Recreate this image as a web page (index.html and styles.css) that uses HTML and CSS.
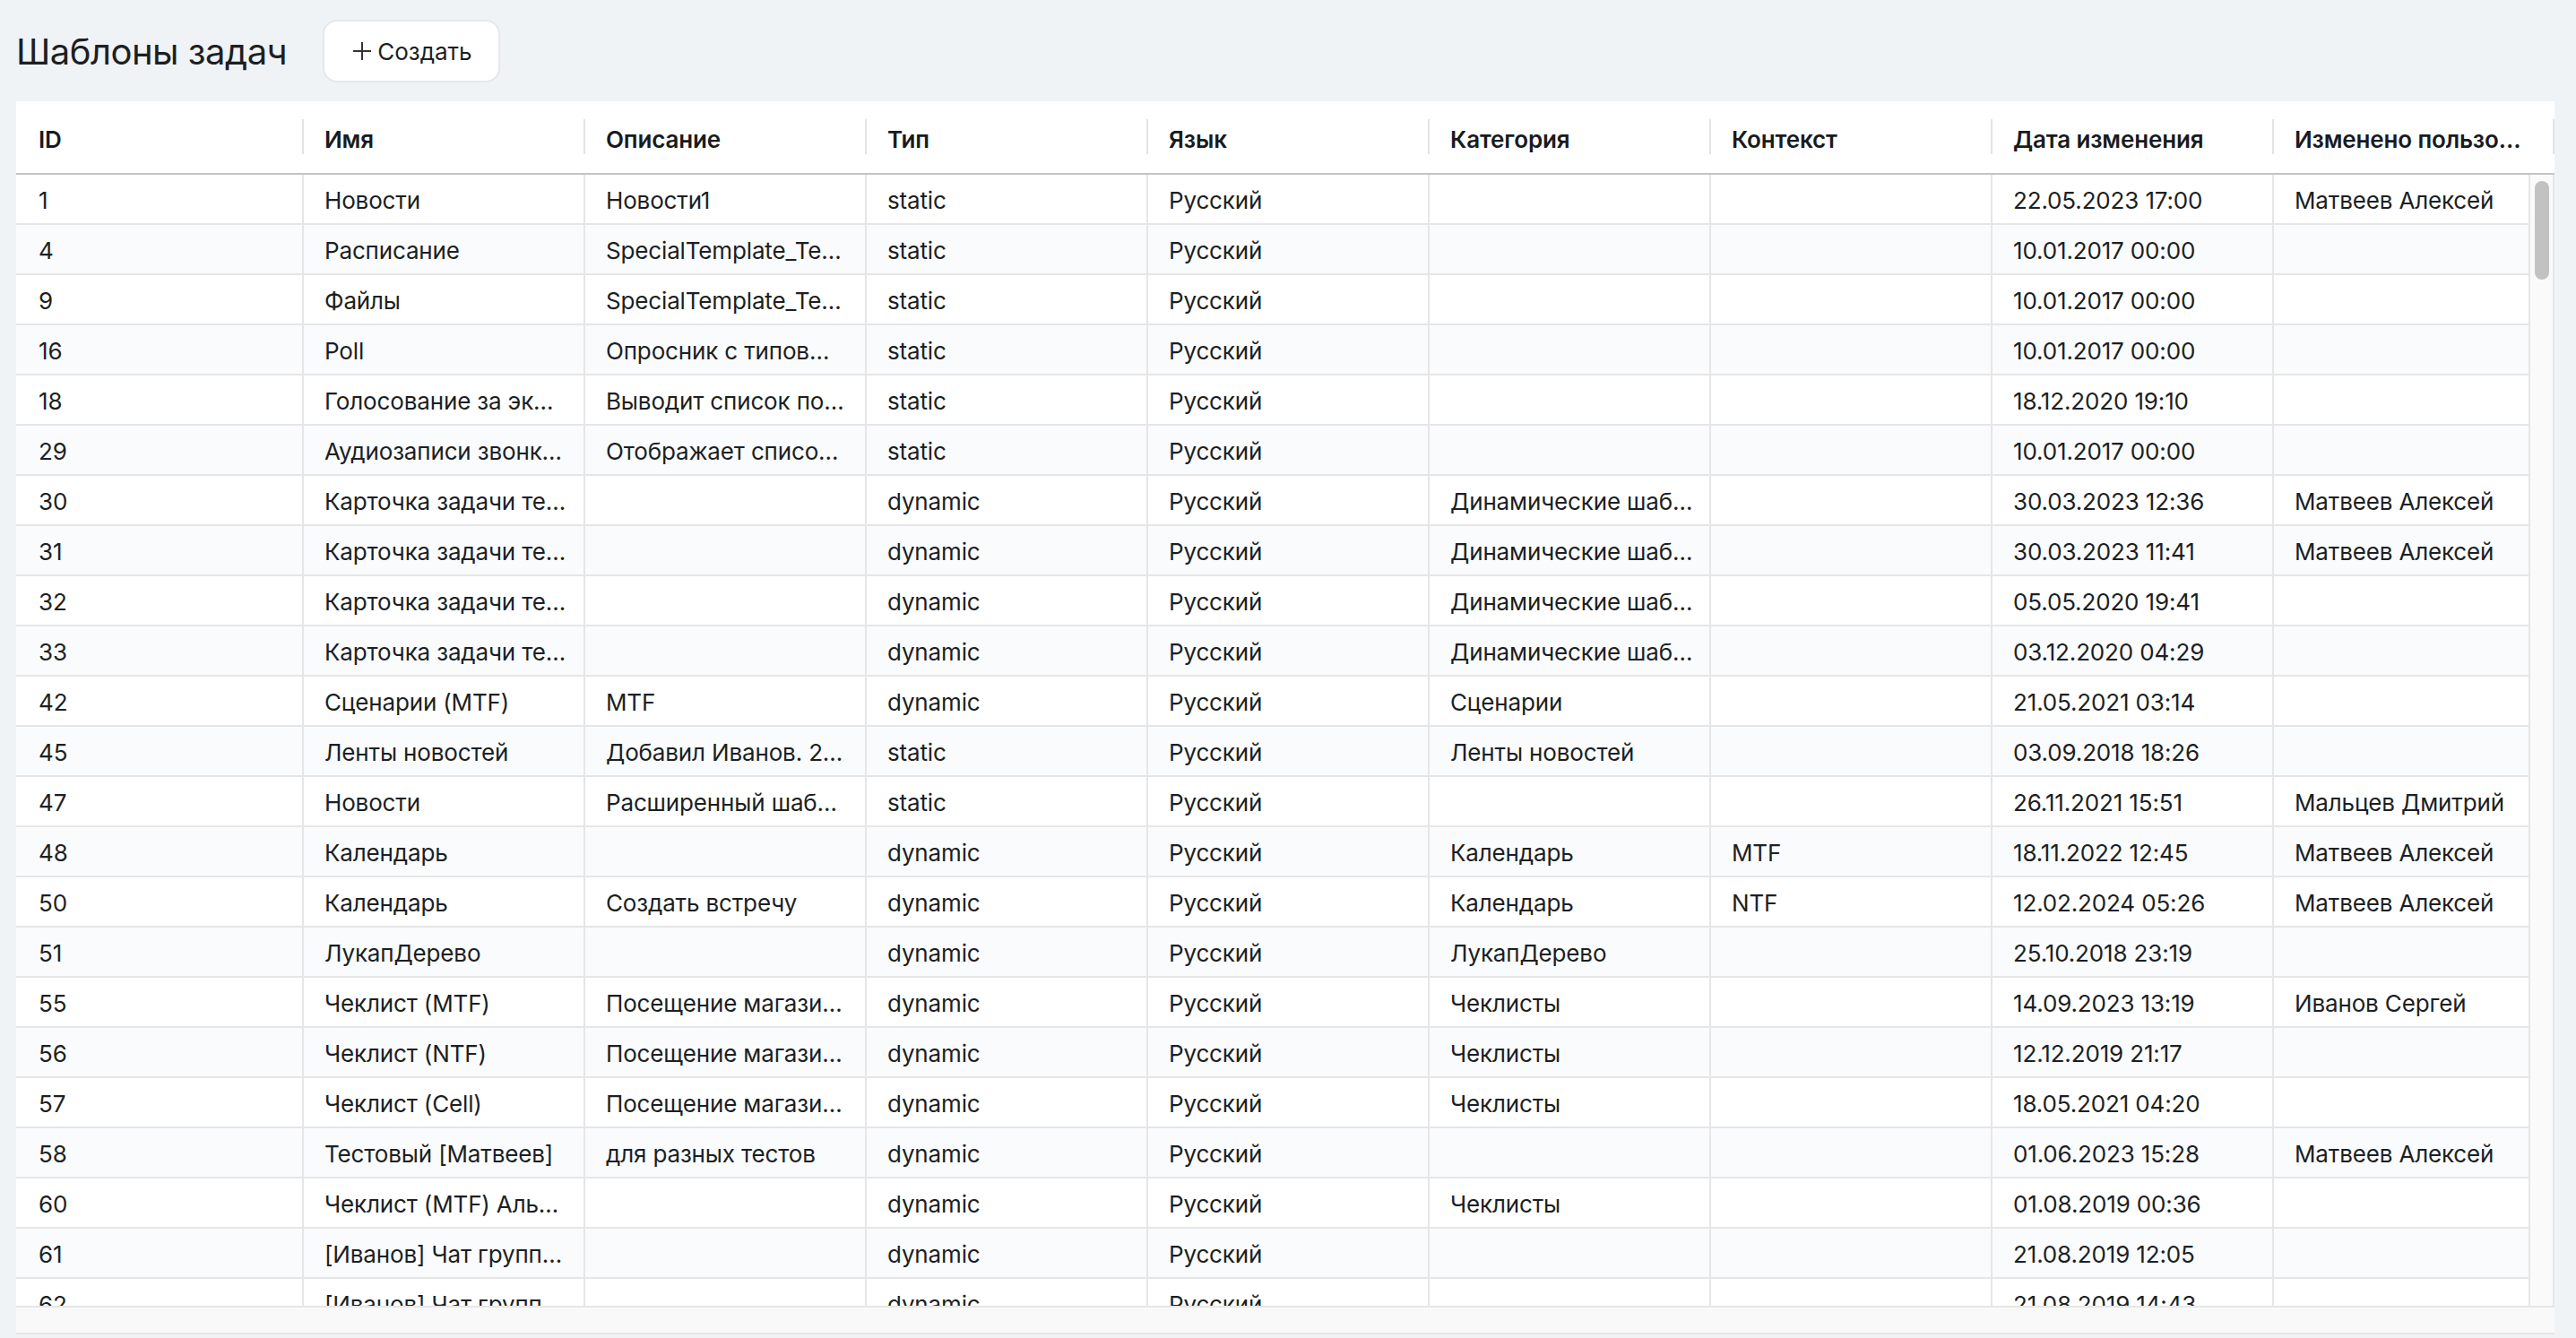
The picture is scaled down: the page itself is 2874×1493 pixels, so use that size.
FILE: index.html
```html
<!DOCTYPE html>
<html lang="ru">
<head>
<meta charset="utf-8">
<title>Шаблоны задач</title>
<link rel="stylesheet" href="styles.css">
</head>
<body>
<div class="page">
  <div class="topbar">
    <h1 class="title">Шаблоны задач</h1>
    <button class="btn-create" type="button">
      <svg class="plus" viewBox="0 0 22 22" width="22" height="22"><path d="M11 1v20M1 11h20" stroke="#333" stroke-width="2" fill="none"/></svg>
      <span>Создать</span>
    </button>
  </div>

  <div class="grid">
    <div class="grid-header">
      <div class="hcell first">ID</div>
      <div class="hcell">Имя</div>
      <div class="hcell">Описание</div>
      <div class="hcell">Тип</div>
      <div class="hcell">Язык</div>
      <div class="hcell">Категория</div>
      <div class="hcell">Контекст</div>
      <div class="hcell">Дата изменения</div>
      <div class="hcell">Изменено пользо…</div>
    </div>

    <div class="grid-body">
      <div class="rows">
        <div class="row"><div class="cell first">1</div><div class="cell">Новости</div><div class="cell">Новости1</div><div class="cell">static</div><div class="cell">Русский</div><div class="cell"></div><div class="cell"></div><div class="cell">22.05.2023 17:00</div><div class="cell last">Матвеев Алексей</div></div>
        <div class="row alt"><div class="cell first">4</div><div class="cell">Расписание</div><div class="cell">SpecialTemplate_Te…</div><div class="cell">static</div><div class="cell">Русский</div><div class="cell"></div><div class="cell"></div><div class="cell">10.01.2017 00:00</div><div class="cell last"></div></div>
        <div class="row"><div class="cell first">9</div><div class="cell">Файлы</div><div class="cell">SpecialTemplate_Te…</div><div class="cell">static</div><div class="cell">Русский</div><div class="cell"></div><div class="cell"></div><div class="cell">10.01.2017 00:00</div><div class="cell last"></div></div>
        <div class="row alt"><div class="cell first">16</div><div class="cell">Poll</div><div class="cell">Опросник с типов…</div><div class="cell">static</div><div class="cell">Русский</div><div class="cell"></div><div class="cell"></div><div class="cell">10.01.2017 00:00</div><div class="cell last"></div></div>
        <div class="row"><div class="cell first">18</div><div class="cell">Голосование за эк…</div><div class="cell">Выводит список по…</div><div class="cell">static</div><div class="cell">Русский</div><div class="cell"></div><div class="cell"></div><div class="cell">18.12.2020 19:10</div><div class="cell last"></div></div>
        <div class="row alt"><div class="cell first">29</div><div class="cell">Аудиозаписи звонк…</div><div class="cell">Отображает списо…</div><div class="cell">static</div><div class="cell">Русский</div><div class="cell"></div><div class="cell"></div><div class="cell">10.01.2017 00:00</div><div class="cell last"></div></div>
        <div class="row"><div class="cell first">30</div><div class="cell">Карточка задачи те…</div><div class="cell"></div><div class="cell">dynamic</div><div class="cell">Русский</div><div class="cell">Динамические шаб…</div><div class="cell"></div><div class="cell">30.03.2023 12:36</div><div class="cell last">Матвеев Алексей</div></div>
        <div class="row alt"><div class="cell first">31</div><div class="cell">Карточка задачи те…</div><div class="cell"></div><div class="cell">dynamic</div><div class="cell">Русский</div><div class="cell">Динамические шаб…</div><div class="cell"></div><div class="cell">30.03.2023 11:41</div><div class="cell last">Матвеев Алексей</div></div>
        <div class="row"><div class="cell first">32</div><div class="cell">Карточка задачи те…</div><div class="cell"></div><div class="cell">dynamic</div><div class="cell">Русский</div><div class="cell">Динамические шаб…</div><div class="cell"></div><div class="cell">05.05.2020 19:41</div><div class="cell last"></div></div>
        <div class="row alt"><div class="cell first">33</div><div class="cell">Карточка задачи те…</div><div class="cell"></div><div class="cell">dynamic</div><div class="cell">Русский</div><div class="cell">Динамические шаб…</div><div class="cell"></div><div class="cell">03.12.2020 04:29</div><div class="cell last"></div></div>
        <div class="row"><div class="cell first">42</div><div class="cell">Сценарии (MTF)</div><div class="cell">MTF</div><div class="cell">dynamic</div><div class="cell">Русский</div><div class="cell">Сценарии</div><div class="cell"></div><div class="cell">21.05.2021 03:14</div><div class="cell last"></div></div>
        <div class="row alt"><div class="cell first">45</div><div class="cell">Ленты новостей</div><div class="cell">Добавил Иванов. 2…</div><div class="cell">static</div><div class="cell">Русский</div><div class="cell">Ленты новостей</div><div class="cell"></div><div class="cell">03.09.2018 18:26</div><div class="cell last"></div></div>
        <div class="row"><div class="cell first">47</div><div class="cell">Новости</div><div class="cell">Расширенный шаб…</div><div class="cell">static</div><div class="cell">Русский</div><div class="cell"></div><div class="cell"></div><div class="cell">26.11.2021 15:51</div><div class="cell last">Мальцев Дмитрий</div></div>
        <div class="row alt"><div class="cell first">48</div><div class="cell">Календарь</div><div class="cell"></div><div class="cell">dynamic</div><div class="cell">Русский</div><div class="cell">Календарь</div><div class="cell">MTF</div><div class="cell">18.11.2022 12:45</div><div class="cell last">Матвеев Алексей</div></div>
        <div class="row"><div class="cell first">50</div><div class="cell">Календарь</div><div class="cell">Создать встречу</div><div class="cell">dynamic</div><div class="cell">Русский</div><div class="cell">Календарь</div><div class="cell">NTF</div><div class="cell">12.02.2024 05:26</div><div class="cell last">Матвеев Алексей</div></div>
        <div class="row alt"><div class="cell first">51</div><div class="cell">ЛукапДерево</div><div class="cell"></div><div class="cell">dynamic</div><div class="cell">Русский</div><div class="cell">ЛукапДерево</div><div class="cell"></div><div class="cell">25.10.2018 23:19</div><div class="cell last"></div></div>
        <div class="row"><div class="cell first">55</div><div class="cell">Чеклист (MTF)</div><div class="cell">Посещение магази…</div><div class="cell">dynamic</div><div class="cell">Русский</div><div class="cell">Чеклисты</div><div class="cell"></div><div class="cell">14.09.2023 13:19</div><div class="cell last">Иванов Сергей</div></div>
        <div class="row alt"><div class="cell first">56</div><div class="cell">Чеклист (NTF)</div><div class="cell">Посещение магази…</div><div class="cell">dynamic</div><div class="cell">Русский</div><div class="cell">Чеклисты</div><div class="cell"></div><div class="cell">12.12.2019 21:17</div><div class="cell last"></div></div>
        <div class="row"><div class="cell first">57</div><div class="cell">Чеклист (Cell)</div><div class="cell">Посещение магази…</div><div class="cell">dynamic</div><div class="cell">Русский</div><div class="cell">Чеклисты</div><div class="cell"></div><div class="cell">18.05.2021 04:20</div><div class="cell last"></div></div>
        <div class="row alt"><div class="cell first">58</div><div class="cell">Тестовый [Матвеев]</div><div class="cell">для разных тестов</div><div class="cell">dynamic</div><div class="cell">Русский</div><div class="cell"></div><div class="cell"></div><div class="cell">01.06.2023 15:28</div><div class="cell last">Матвеев Алексей</div></div>
        <div class="row"><div class="cell first">60</div><div class="cell">Чеклист (MTF) Аль…</div><div class="cell"></div><div class="cell">dynamic</div><div class="cell">Русский</div><div class="cell">Чеклисты</div><div class="cell"></div><div class="cell">01.08.2019 00:36</div><div class="cell last"></div></div>
        <div class="row alt"><div class="cell first">61</div><div class="cell">[Иванов] Чат групп…</div><div class="cell"></div><div class="cell">dynamic</div><div class="cell">Русский</div><div class="cell"></div><div class="cell"></div><div class="cell">21.08.2019 12:05</div><div class="cell last"></div></div>
        <div class="row"><div class="cell first">62</div><div class="cell">[Иванов] Чат групп…</div><div class="cell"></div><div class="cell">dynamic</div><div class="cell">Русский</div><div class="cell"></div><div class="cell"></div><div class="cell">21.08.2019 14:43</div><div class="cell last"></div></div>
      </div>
      <div class="vscroll"><div class="thumb"></div></div>
    </div>
    <div class="hscroll"></div>
  </div>
</div>
</body>
</html>
```

FILE: styles.css
```css
* { box-sizing: border-box; }

html, body {
  margin: 0;
  padding: 0;
  background: #f0f3f6;
  font-family: "Inter", "Noto Sans", sans-serif;
  color: #1c1f23;
}

.page {
  padding: 22px 24px 0 18px;
  height: 1493px;
  overflow: hidden;
}

.topbar {
  display: flex;
  align-items: center;
  gap: 40px;
  height: 70px;
}

.title {
  margin: 0;
  font-size: 40px;
  font-weight: 400;
  letter-spacing: -0.5px;
  color: #1d1f22;
}

.btn-create {
  display: flex;
  align-items: center;
  gap: 6px;
  height: 70px;
  width: 198px;
  padding: 0 0 0 31px;
  background: #fff;
  border: 2px solid #e4e7eb;
  border-radius: 16px;
  font-family: inherit;
  font-size: 26px;
  color: #1d1f22;
}

.plus { display: block; }

.grid {
  margin-top: 21px;
  width: 2832px;
  background: #fff;
  border-bottom: 2px solid #e6e6e6;
}

.grid-header {
  display: grid;
  grid-template-columns: 321px repeat(7, 314px) 313px;
  height: 82px;
  border-bottom: 2px solid #c4c4c4;
}

.hcell {
  position: relative;
  display: flex;
  align-items: center;
  padding: 4px 14px 0 23px;
  font-size: 26px;
  font-weight: 600;
  letter-spacing: -0.15px;
  color: #181b1e;
  white-space: nowrap;
  overflow: hidden;
}
.hcell.first { padding-left: 25px; }
.hcell::after {
  content: "";
  position: absolute;
  right: 0;
  top: 20px;
  width: 2px;
  height: 39px;
  background: #e2e4e7;
}

.grid-body {
  display: flex;
  height: 1262px;
}

.rows {
  width: 2803px;
  overflow: hidden;
}

.row {
  display: grid;
  grid-template-columns: 321px repeat(7, 314px) 284px;
  height: 56px;
  border-bottom: 2px solid #e6e6e6;
  background: #fff;
}
.row.alt { background: #fafbfd; }

.cell {
  padding: 4px 12px 0 23px;
  line-height: 50px;
  font-size: 26px;
  letter-spacing: -0.15px;
  color: #1c1f23;
  white-space: nowrap;
  overflow: hidden;
  text-overflow: ellipsis;
  border-right: 2px solid #e6e6e6;
}
.cell.first { padding-left: 25px; }
.cell.last { border-right: none; }

.vscroll {
  width: 29px;
  background: #fafafa;
  border-left: 2px solid #e6e6e6;
  border-right: 2px solid #e6e6e6;
  padding: 7px 0 0 5px;
}
.thumb {
  width: 16px;
  height: 110px;
  border-radius: 8px;
  background: #c2c2c2;
}

.hscroll {
  height: 30px;
  background: #f9f9f9;
  border-top: 2px solid #e6e6e6;
}
```
